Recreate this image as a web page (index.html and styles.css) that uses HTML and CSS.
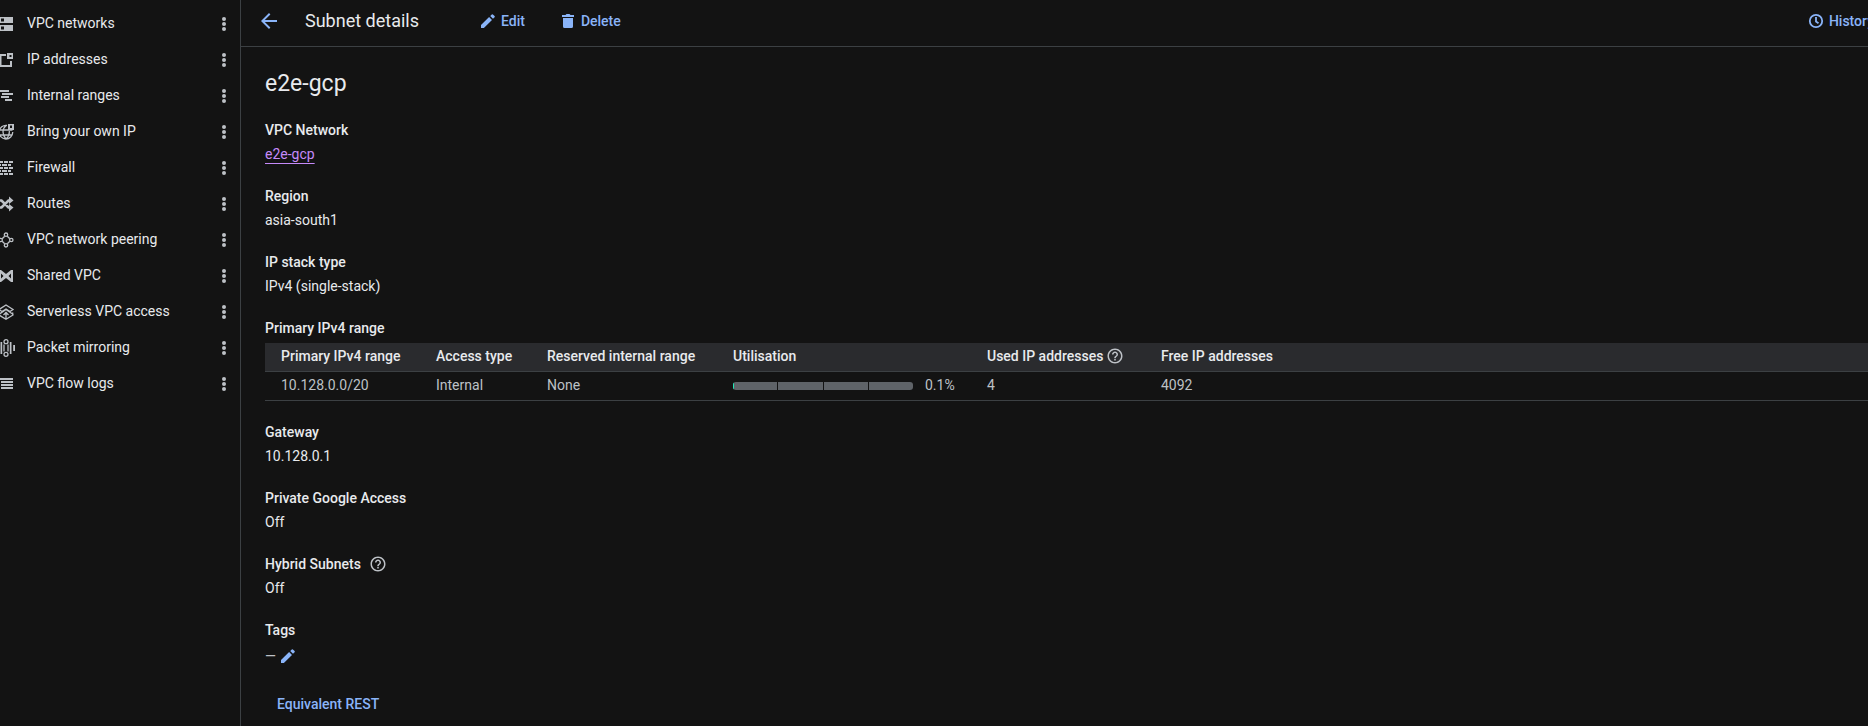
FILE: index.html
```
<!DOCTYPE html>
<html lang="en">
  <head>
    <meta charset="UTF-8" />
    <meta name="viewport" content="width=device-width, initial-scale=1.0" />
    <title>Subnet details</title>
    <link rel="stylesheet" href="styles.css">
  </head>
  <body>
    <!-- shared icons -->
    <svg class="sprite" aria-hidden="true">
      <symbol id="more" viewBox="0 0 18 18">
        <circle cx="9" cy="4" r="2" /><circle cx="9" cy="9" r="2" /><circle cx="9" cy="14" r="2" />
      </symbol>
      <symbol id="pencil" viewBox="0 0 18 18">
        <path d="M2 13.1V16h2.900l8.100-8.100L10.100 5zM15.600 5.200a.8.8 0 0 0 0-1.100l-1.700-1.700a.8.8 0 0 0-1.100 0L11.200 4l2.800 2.800z" />
      </symbol>
      <symbol id="help" viewBox="0 0 24 24">
        <path d="M11 18h2v-2h-2v2zm1-16C6.480 2 2 6.480 2 12s4.480 10 10 10 10-4.480 10-10S17.520 2 12 2zm0 18c-4.410 0-8-3.590-8-8s3.590-8 8-8 8 3.590 8 8-3.590 8-8 8zm0-14c-2.210 0-4 1.790-4 4h2c0-1.100.9-2 2-2s2 .9 2 2c0 2-3 1.750-3 5h2c0-2.250 3-2.500 3-5 0-2.210-1.790-4-4-4z" />
      </symbol>
    </svg>

    <nav class="sidebar">
      <ul class="menu">
        <li class="menu-item">
          <a href="#">
            <svg class="icon" viewBox="0 0 18 18"><path fill-rule="evenodd" d="M2 2h14v6H2zM4 3.500v3h3v-3zM2 10h14v6H2zM4 11.500v3h3v-3z" /></svg>
            VPC networks
          </a>
          <button class="more" aria-label="More options"><svg><use href="#more" /></svg></button>
        </li>
        <li class="menu-item">
          <a href="#">
            <svg class="icon" viewBox="0 0 18 18"><path fill-rule="evenodd" d="M2 3h7v2H4.500v9H13V10h2v6H2zM10 2h6v6h-6zM12.500 4v2h2V4z" /></svg>
            IP addresses
          </a>
          <button class="more" aria-label="More options"><svg><use href="#more" /></svg></button>
        </li>
        <li class="menu-item">
          <a href="#">
            <svg class="icon" viewBox="0 0 18 18"><path d="M2 3h10v2H2zM5 6h11v2H5zM4 9h8v2H4zM8 12h7v2H8z" /></svg>
            Internal ranges
          </a>
          <button class="more" aria-label="More options"><svg><use href="#more" /></svg></button>
        </li>
        <li class="menu-item">
          <a href="#">
            <svg class="icon" viewBox="0 0 18 18"><path class="line" d="M10 2.500A6.800 6.800 0 1 0 15.700 9M2.500 7h13M2.500 12h13M9 2.500C5 6 5 12 9 16M9 16c3-2.500 3.600-5 3.300-8" /><path fill-rule="evenodd" d="M11 1h6v6h-6zM13 2.500V5h2V2.500z" /></svg>
            Bring your own IP
          </a>
          <button class="more" aria-label="More options"><svg><use href="#more" /></svg></button>
        </li>
        <li class="menu-item">
          <a href="#">
            <svg class="icon" viewBox="0 0 18 18"><path d="M2 2h4v2H2zM7 2h4v2H7zM12 2h4v2h-4zM2 5h2v2H2zM5 5h5v2H5zM11 5h3v2h-3zM2 8h4v2H2zM7 8h4v2H7zM12 8h4v2h-4zM2 11h2v2H2zM5 11h5v2H5zM11 11h3v2h-3zM2 14h4v2H2zM7 14h4v2H7zM12 14h4v2h-4z" /></svg>
            Firewall
          </a>
          <button class="more" aria-label="More options"><svg><use href="#more" /></svg></button>
        </li>
        <li class="menu-item">
          <a href="#">
            <svg class="icon" viewBox="0 0 18 18"><path class="heavy" d="M1 5.500h3.500l7 7H14M1 12.500h3.500l7-7H14" /><path d="M12 1.500 16.500 5.500 12 9zM12 9l4.500 3.500-4.500 4z" /></svg>
            Routes
          </a>
          <button class="more" aria-label="More options"><svg><use href="#more" /></svg></button>
        </li>
        <li class="menu-item">
          <a href="#">
            <svg class="icon" viewBox="0 0 18 18"><path class="line" d="M7.700 5.200 5.200 7.700M10.300 5.200l2.500 2.500M5.200 10.300l2.500 2.500M12.800 10.300l-2.500 2.500" /><g class="line"><circle cx="9" cy="3.700" r="1.700" /><circle cx="9" cy="14.300" r="1.700" /><circle cx="3.700" cy="9" r="1.700" /><circle cx="14.300" cy="9" r="1.700" /></g></svg>
            VPC network peering
          </a>
          <button class="more" aria-label="More options"><svg><use href="#more" /></svg></button>
        </li>
        <li class="menu-item">
          <a href="#">
            <svg class="icon" viewBox="0 0 18 18"><path fill-rule="evenodd" d="M2 3h2l5 4 5-4h2v12h-2l-5-4-5 4H2zM4 6.500v5L6.500 9zM14 6.500v5L11.500 9z" /></svg>
            Shared VPC
          </a>
          <button class="more" aria-label="More options"><svg><use href="#more" /></svg></button>
        </li>
        <li class="menu-item">
          <a href="#">
            <svg class="icon" viewBox="0 0 18 18"><path class="line" d="M2 6.500 9 2l7 4.500-3 2L9 6 5 8.500zM2.500 9.500 2 12l7 4.300 7-4.300-.5-2.500M2.500 11 9 6.500l6.500 4.500M9 9.500V16M6.500 12 9 9.500l2.500 2.500" /></svg>
            Serverless VPC access
          </a>
          <button class="more" aria-label="More options"><svg><use href="#more" /></svg></button>
        </li>
        <li class="menu-item">
          <a href="#">
            <svg class="icon" viewBox="0 0 18 18"><path d="M1 6h1.500v6H1zM3.500 3h1.700v12H3.500zM12.800 3h1.700v12h-1.700zM16.200 6h1.800v6h-1.800z" /><path class="line" d="M7 12.500v-7M11 5.500v7" /><g class="line"><circle cx="9" cy="2.700" r="2" /><circle cx="9" cy="15.300" r="2" /></g></svg>
            Packet mirroring
          </a>
          <button class="more" aria-label="More options"><svg><use href="#more" /></svg></button>
        </li>
        <li class="menu-item">
          <a href="#">
            <svg class="icon" viewBox="0 0 18 18"><path d="M2 3h14v2H2zM4 6h12v2H4zM4 9h12v2H4zM4 12h12v2H4z" /></svg>
            VPC flow logs
          </a>
          <button class="more" aria-label="More options"><svg><use href="#more" /></svg></button>
        </li>
      </ul>
    </nav>

    <main class="main">
      <header class="toolbar">
        <button class="back" aria-label="Back">
          <svg viewBox="0 0 16 16"><path d="M16 7H3.800l5.600-5.600L8 0 0 8l8 8 1.400-1.400L3.800 9H16z" /></svg>
        </button>
        <h1 class="page-title">Subnet details</h1>
        <button class="action edit"><svg><use href="#pencil" /></svg>Edit</button>
        <button class="action">
          <svg viewBox="0 0 18 18"><path d="M4 6h10v8.500a1.500 1.500 0 0 1-1.500 1.500h-7A1.500 1.500 0 0 1 4 14.500zM3 3h3.500l1-1h3l1 1H15v2H3z" /></svg>
          Delete
        </button>
        <button class="action history">
          <svg viewBox="0 0 18 18"><path class="bold" d="M9 5v4.500l2.500 1.700" /><circle class="bold" cx="9" cy="9" r="6.200" /></svg>
          History
        </button>
      </header>

      <div class="content">
        <h2 class="name">e2e-gcp</h2>

        <section class="field">
          <h3>VPC Network</h3>
          <p><a class="visited" href="#">e2e-gcp</a></p>
        </section>
        <section class="field">
          <h3>Region</h3>
          <p>asia-south1</p>
        </section>
        <section class="field">
          <h3>IP stack type</h3>
          <p>IPv4 (single-stack)</p>
        </section>

        <section class="range">
          <h3>Primary IPv4 range</h3>
          <table>
            <colgroup>
              <col class="col-range">
              <col class="col-access">
              <col class="col-reserved">
              <col class="col-usage">
              <col class="col-used">
              <col>
            </colgroup>
            <thead>
              <tr>
                <th>Primary IPv4 range</th>
                <th>Access type</th>
                <th>Reserved internal range</th>
                <th>Utilisation</th>
                <th><span class="with-help">Used IP addresses<svg class="help"><use href="#help" /></svg></span></th>
                <th>Free IP addresses</th>
              </tr>
            </thead>
            <tbody>
              <tr>
                <td>10.128.0.0/20</td>
                <td>Internal</td>
                <td>None</td>
                <td>
                  <div class="usage">
                    <div class="bar">
                      <span class="used" style="width: 0.1%"></span>
                      <i></i><i></i><i></i><i></i>
                    </div>
                    0.1%
                  </div>
                </td>
                <td>4</td>
                <td>4092</td>
              </tr>
            </tbody>
          </table>
        </section>

        <section class="field">
          <h3>Gateway</h3>
          <p>10.128.0.1</p>
        </section>
        <section class="field">
          <h3>Private Google Access</h3>
          <p>Off</p>
        </section>
        <section class="field">
          <h3 class="wide-help">Hybrid Subnets<svg class="help"><use href="#help" /></svg></h3>
          <p>Off</p>
        </section>
        <section class="field">
          <h3>Tags</h3>
          <p class="tags">—<button class="edit-tags" aria-label="Edit tags"><svg><use href="#pencil" /></svg></button></p>
        </section>

        <button class="rest">Equivalent REST</button>
      </div>
    </main>
  </body>
</html>
```
FILE: styles.css
```
*,
*::before,
*::after {
  box-sizing: border-box;
}

:root {
  --bg: #131313;
  --line: #3c4043;
  --text: #e8eaed;
  --muted: #bdc1c6;
  --blue: #8ab4f8;
  --visited: #c58af9;
}

body {
  margin: 0;
  display: flex;
  min-height: 100vh;
  overflow: hidden;
  background-color: var(--bg);
  color: var(--text);
  font-family: Roboto, "Liberation Sans", sans-serif;
  font-size: 14px;
  line-height: 24px;
}

h1,
h2,
h3,
p,
ul {
  margin: 0;
  padding: 0;
}

button {
  padding: 0;
  border: none;
  background: none;
  color: var(--blue);
  font: inherit;
  cursor: pointer;
}

svg {
  display: block;
  flex: none;
  width: 18px;
  height: 18px;
  fill: currentColor;
}

.sprite {
  display: none;
}

.line {
  fill: none;
  stroke: currentColor;
  stroke-width: 1.3;
}

.bold {
  fill: none;
  stroke: currentColor;
  stroke-width: 1.8;
}

.heavy {
  fill: none;
  stroke: currentColor;
  stroke-width: 2.6;
}

/* Sidebar */

.sidebar {
  flex: none;
  width: 241px;
  padding-top: 5px;
  border-right: 1px solid var(--line);
  overflow: hidden;
}

.menu {
  margin-left: -3px;
  list-style: none;
}

.menu-item {
  display: flex;
  align-items: center;
  justify-content: space-between;
  height: 36px;
  padding-right: 7px;
}

.menu-item a {
  display: flex;
  align-items: center;
  gap: 12px;
  color: var(--text);
  text-decoration: none;
}

.menu-item svg {
  color: var(--muted);
  margin-top: 2px;
}

/* Toolbar */

.main {
  flex: 1;
  min-width: 0;
}

.toolbar {
  display: flex;
  align-items: center;
  height: 47px;
  padding: 0 0 4px 20px;
  border-bottom: 1px solid var(--line);
  overflow: hidden;
}

.back svg {
  width: 16px;
  height: 16px;
}

.page-title {
  margin-left: 28px;
  font-size: 18px;
  font-weight: 400;
}

.action {
  display: flex;
  align-items: center;
  gap: 4px;
  flex: none;
  margin-left: 34px;
  font-weight: 500;
}

.edit {
  margin-left: 60px;
}

/* the last action runs past the right edge */
.history {
  margin-left: auto;
  margin-right: -6px;
}

/* Details */

.content {
  padding: 25px 0 10px 24px;
}

.name {
  margin-bottom: 22px;
  font-size: 23px;
  font-weight: 400;
}

h3,
th {
  font-size: 14px;
  font-weight: 500;
}

.field {
  margin-bottom: 18px;
}

.visited {
  color: var(--visited);
  text-underline-offset: 4px;
}

.help {
  color: var(--muted);
}

.with-help,
.wide-help {
  display: flex;
  align-items: center;
  gap: 3px;
}

.wide-help {
  gap: 8px;
}

.range {
  margin-bottom: 19px;
}

table {
  width: 100%;
  margin-top: 3px;
  table-layout: fixed;
  border-collapse: separate;
  border-spacing: 0;
  text-align: left;
  white-space: nowrap;
}

.col-range {
  width: 155px;
}

.col-access {
  width: 111px;
}

.col-reserved {
  width: 186px;
}

.col-usage {
  width: 254px;
}

.col-used {
  width: 174px;
}

th,
td {
  height: 29px;
  padding: 0 16px 2px;
  border-bottom: 1px solid var(--line);
}

th {
  background-color: #2a2b2e;
}

td {
  color: var(--muted);
}

.usage {
  display: flex;
  align-items: center;
  gap: 12px;
}

.bar {
  position: relative;
  display: flex;
  gap: 1px;
  width: 180px;
  height: 8px;
  margin-top: 2px;
  border-radius: 3px;
  overflow: hidden;
}

.bar i {
  flex: 1;
  background-color: #5f6368;
}

.used {
  position: absolute;
  min-width: 1px;
  height: 100%;
  background-color: #1de9b6;
}

.tags {
  display: flex;
  align-items: center;
  gap: 3px;
  padding-top: 2px;
  color: var(--muted);
}

.rest {
  display: block;
  margin: 24px 0 0 12px;
  font-weight: 500;
}
```
